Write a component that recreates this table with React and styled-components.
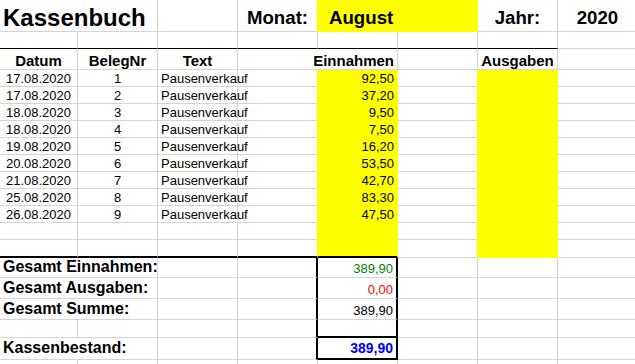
import React from 'react'
import styled, { createGlobalStyle } from 'styled-components'

const GRID = '#d4d4d4'
const YELLOW = '#ffff00'
const line = (c, w = 1) => `${w}px solid ${c}`

const GlobalStyle = createGlobalStyle`
  html, body { margin: 0; padding: 0; background: #fff; overflow: hidden; }
  body { font-family: "Liberation Sans", Arial, sans-serif; color: #000; }
`

const entries = [
    ['17.08.2020', 1, '92,50'],
    ['17.08.2020', 2, '37,20'],
    ['18.08.2020', 3, '9,50'],
    ['18.08.2020', 4, '7,50'],
    ['19.08.2020', 5, '16,20'],
    ['20.08.2020', 6, '53,50'],
    ['21.08.2020', 7, '42,70'],
    ['25.08.2020', 8, '83,30'],
    ['26.08.2020', 9, '47,50'],
]

const totals = [
    { label: 'Gesamt Einnahmen:', value: '389,90', color: '#008000' },
    { label: 'Gesamt Ausgaben:', value: '0,00', color: '#ff0000' },
    { label: 'Gesamt Summe:', value: '389,90', color: '#000' },
]

function App() {
    const filler = [null, null]
    return (
        <>
            <GlobalStyle />
            <Sheet>
                {/* Zeile 1: Titel */}
                <Cell $r="none" $pb={1}><Title>Kassenbuch</Title></Cell>
                <Cell />
                <Cell />
                <Cell $align="center" $r={line(YELLOW)} $pb={3}><Label>Monat:</Label></Cell>
                <Cell $span={2} $bg={YELLOW} $r={line(YELLOW)} $b={line(YELLOW)} $pb={3} $pl={11}><Label>August</Label></Cell>
                <Cell $align="center" $pb={3}><Label>Jahr:</Label></Cell>
                <Cell $align="center" $pb={3}><Label>2020</Label></Cell>

                {/* Zeile 2 */}
                {Array.from({ length: 7 }).map((_, i) => (
                    <Cell key={'e' + i} $b={line('#000')} />
                ))}
                <Cell />

                {/* Kopfzeile */}
                <Cell $align="center" $pb={1}><Head>Datum</Head></Cell>
                <Cell $align="center" $pb={1}><Head>BelegNr</Head></Cell>
                <Cell $align="center" $pb={1}><Head>Text</Head></Cell>
                <Cell $r="none" />
                <Cell $align="right" $pb={1}><Head>Einnahmen</Head></Cell>
                <Cell />
                <Cell $align="center" $pb={1}><Head>Ausgaben</Head></Cell>
                <Cell />

                {/* Buchungen */}
                {[...entries, ...filler].map((row, i) => {
                    const last = i === entries.length + filler.length - 1
                    const b = last ? line('#000', 2) : undefined
                    return (
                        <React.Fragment key={'r' + i}>
                            <Cell $align="center" $b={b}><Value>{row && row[0]}</Value></Cell>
                            <Cell $align="center" $b={b}><Value>{row && row[1]}</Value></Cell>
                            <Cell $b={b}><Value>{row && 'Pausenverkauf'}</Value></Cell>
                            <Cell $r={line(YELLOW)} $b={b} />
                            <Cell $align="right" $bg={YELLOW} $r={line(YELLOW)} $b={b || line(YELLOW)}>
                                <Value>{row && row[2]}</Value>
                            </Cell>
                            <Cell $r={line(YELLOW)} />
                            <Cell $bg={YELLOW} $r={line(YELLOW)} $b={line(YELLOW)} />
                            <Cell />
                        </React.Fragment>
                    )
                })}

                {/* Summen */}
                {totals.map(t => (
                    <React.Fragment key={t.label}>
                        <Cell $r="none" $pb={2}><SumLabel>{t.label}</SumLabel></Cell>
                        <Cell />
                        <Cell />
                        <Cell $r={line('#000', 2)} />
                        <Cell $align="right" $r={line('#000', 2)} $pb={2}>
                            <Value $color={t.color}>{t.value}</Value>
                        </Cell>
                        <Cell />
                        <Cell />
                        <Cell />
                    </React.Fragment>
                ))}

                <Cell />
                <Cell />
                <Cell />
                <Cell $r={line('#000', 2)} />
                <Cell $r={line('#000', 2)} $b={line('#000', 2)} />
                <Cell />
                <Cell />
                <Cell />

                <Cell $r="none" $pb={3}><SumLabel>Kassenbestand:</SumLabel></Cell>
                <Cell />
                <Cell />
                <Cell $r={line('#000', 2)} />
                <Cell $align="right" $r={line('#000', 2)} $b={line('#000', 2)} $pb={3}>
                    <Value $color="#0000ff" $bold $size={14}>389,90</Value>
                </Cell>
                <Cell />
                <Cell />
                <Cell />

                {Array.from({ length: 8 }).map((_, i) => <Cell key={'z' + i} />)}
            </Sheet>
        </>
    )
}

export default App


const Sheet = styled.div`
    display : grid;
    grid-template-columns : 78px repeat(7, 80px);
    grid-template-rows : 32px 17px 21px repeat(10, 17px) 18px 20px 21px 21px 18px 22px 20px;
    width : 638px;
`

const Cell = styled.div`
    box-sizing : border-box;
    grid-column : span ${p => p.$span || 1};
    display : flex;
    align-items : flex-end;
    justify-content : ${p => p.$align === 'right' ? 'flex-end' : p.$align === 'center' ? 'center' : 'flex-start'};
    padding : 0 3px ${p => p.$pb ?? 1}px ${p => p.$pl ?? 3}px;
    min-width : 0;
    white-space : nowrap;
    background : ${p => p.$bg || 'transparent'};
    border-right : ${p => p.$r || line(GRID)};
    border-bottom : ${p => p.$b || line(GRID)};
`

const Title = styled.span`
    font-size : 24px;
    font-weight : 700;
    line-height : 1;
`

const Label = styled.span`
    font-size : 18.67px;
    font-weight : 700;
    line-height : 1;
`

const Head = styled.span`
    font-size : 15px;
    font-weight : 700;
    line-height : 1;
`

const Value = styled.span`
    font-size : ${p => p.$size || 13}px;
    font-weight : ${p => p.$bold ? 700 : 400};
    color : ${p => p.$color || '#000'};
    line-height : 1;
`

const SumLabel = styled.span`
    font-size : 16px;
    font-weight : 700;
    line-height : 1;
`
